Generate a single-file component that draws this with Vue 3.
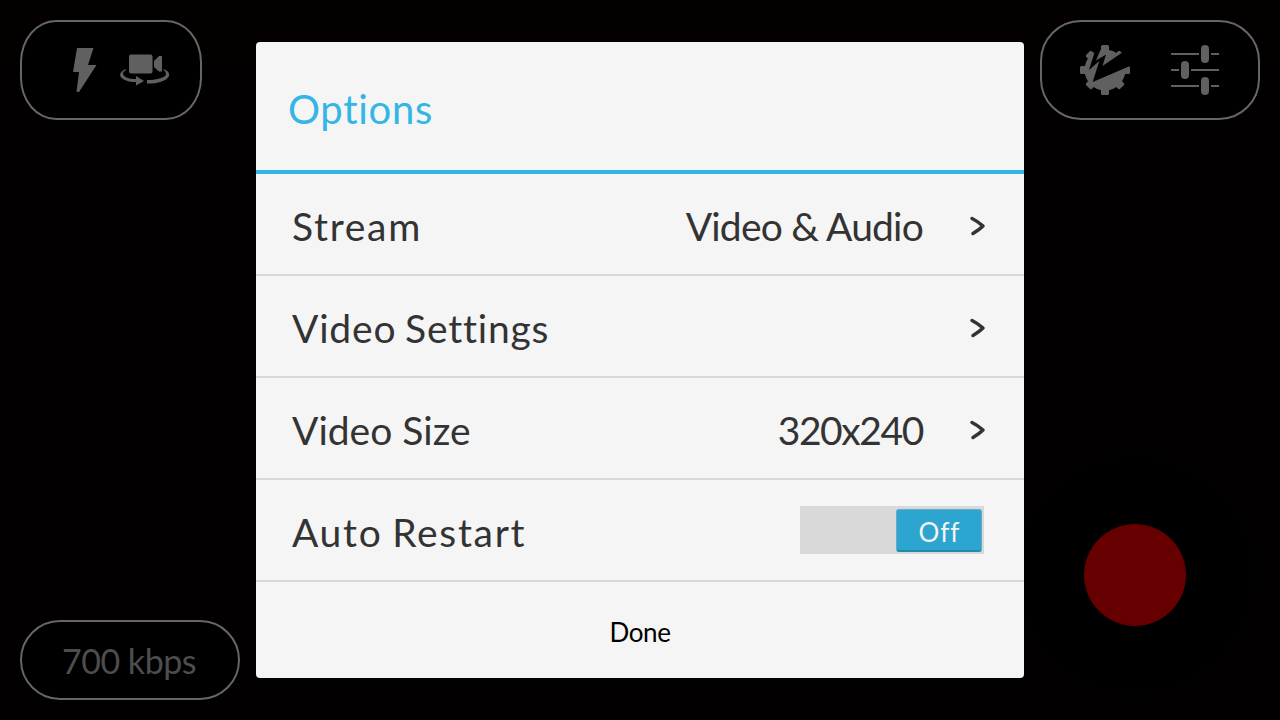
<script setup>
const rows = [
  { id: 'stream', label: 'Stream', value: 'Video & Audio' },
  { id: 'settings', label: 'Video Settings', value: '' },
  { id: 'size', label: 'Video Size', value: '320x240' },
]
</script>

<template>
  <div class="screen">
    <aside class="side left">
      <div class="pill camera">
        <svg class="bolt" width="26" height="46" viewBox="0 0 26 46"><path d="M5 1H21.500L16 18H24.500L7 45H4.500L7 25H1Z" /></svg>
        <svg class="flip" width="50" height="32" viewBox="0 0 50 32">
          <rect x="9" y="0.500" width="23.500" height="19" rx="2" />
          <path d="M34 7L39 2H42V17.500H39L34 13Z" />
          <path d="M6 15C-1 18 -1.500 22 3 25C7 27.500 11 28 16 28V31.500L24 27L16 22V25C9 25 3.500 23 3 20C3 18 4 17 6 16Z" />
          <path d="M43.500 15C51 18 51 23 44 26.500C39 29 34 29.500 27 29.500V26C35 26 45.500 24 46 20.500C46 18 45 17 43.500 16Z" />
        </svg>
      </div>
      <div class="pill rate"><span>700 kbps</span></div>
    </aside>
    <main class="dialog">
      <h1><span class="title">Options</span></h1>
      <div v-for="r in rows" :key="r.id" class="row">
        <span class="label" :class="r.id">{{ r.label }}</span>
        <span class="value" :class="'v-' + r.id">{{ r.value }}</span>
        <svg class="chevron" width="18" height="20" viewBox="0 0 18 20"><path d="M4 2.500Q10 5.500 15 10Q11 14 5 17.500" /></svg>
      </div>
      <div class="row">
        <span class="label restart">Auto Restart</span>
        <div class="switch"><div class="thumb"><span>Off</span></div></div>
      </div>
      <button class="done"><span>Done</span></button>
    </main>
    <aside class="side right">
      <div class="pill tools">
        <svg class="gear" width="50" height="50" viewBox="0 0 50 50">
          <circle cx="25" cy="25" r="20.5" />
          <path d="M21 6V1.500Q21 0 22.500 0H27.500Q29 0 29 1.500V6L32 8H18ZM21 44V48.500Q21 50 22.500 50H27.500Q29 50 29 48.500V44L32 42H18ZM6 21H1.500Q0 21 0 22.500V27.500Q0 29 1.500 29H6L8 32V18ZM44 21H48.500Q50 21 50 22.500V27.500Q50 29 48.500 29H44L42 32V18Z" />
          <g v-for="a in [45, 135, 225, 315]" :key="a" :transform="`rotate(${a} 25 25)`"><rect x="21" y="1" width="8" height="8" rx="1.500" /></g>
          <path class="cut" d="M15 6L9 25L19.300 16L12.700 37L51 20.500V7H43L22.500 21L26 9.500L16 15.500L21 3.500V0L14 0Z" />
        </svg>
        <svg class="sliders" width="48" height="50" viewBox="0 0 48 50">
          <path d="M0 8h28v2H0zM40 8h8v2h-8zM0 24h8v2H0zM20 24h28v2H20zM0 40h28v2H0zM40 40h8v2h-8z" />
          <rect x="30" y="0" width="8" height="18" rx="4" /><rect x="10" y="16" width="8" height="18" rx="4" /><rect x="30" y="32" width="8" height="18" rx="4" />
        </svg>
      </div>
      <div class="record"><i></i></div>
    </aside>
  </div>
</template>

<style>
body { margin: 0; background: #020000; }
</style>
<style scoped>
* { box-sizing: border-box; }
.screen { width: 1280px; height: 720px; overflow: hidden; display: grid; grid-template-columns: 256px 768px 256px; align-items: center; background: linear-gradient(#050000, #020000 90px); font-family: Lato, "Noto Sans", sans-serif; font-variant-ligatures: none; }
.side { height: 720px; padding: 20px; display: flex; flex-direction: column; justify-content: space-between; }
.pill { border: 2px solid #666; background: #000; display: flex; align-items: center; fill: #606060; }
.camera { width: 182px; height: 100px; border-radius: 36px / 42px; padding-left: 50px; gap: 22px; }
.rate { width: 220px; height: 80px; border-radius: 40px; color: #4d4d4d; font-size: 34px; letter-spacing: -0.500px; padding-left: 40px; white-space: nowrap; }
.right { padding-left: 16px; padding-bottom: 25px; }
.tools { width: 220px; height: 100px; border-radius: 41px; padding-left: 38px; gap: 41px; }
.cut { fill: #000; }
.record { width: 240px; height: 240px; border-radius: 50%; background: #000; display: grid; place-items: center; margin-left: -25px; }
.record i { width: 102px; height: 102px; border-radius: 50%; background: #600; }
.dialog { z-index: 1; width: 768px; height: 636px; background: #f5f5f5; border-radius: 4px; overflow: hidden; display: flex; flex-direction: column; }
h1 { margin: 0; height: 132px; flex: none; border-bottom: 4px solid #33b5e5; padding: 6px 32px 0; display: flex; align-items: center; font-weight: 400; font-size: 40px; letter-spacing: 0.700px; color: #33b5e5; }
.row { height: 102px; flex: none; border-bottom: 2px solid #dadada; padding: 4px 38px 0 36px; display: flex; align-items: center; font-size: 39px; color: #333; white-space: nowrap; }
.stream { letter-spacing: 1.700px; }
.settings { letter-spacing: 0.800px; word-spacing: -2px; }
.restart { letter-spacing: 1.700px; word-spacing: -2px; }
.value { margin-left: auto; margin-right: 45px; }
.v-stream { letter-spacing: -0.800px; }
.v-size { letter-spacing: -1.400px; }
.chevron { fill: none; stroke: #333; stroke-width: 3.500; stroke-linecap: round; stroke-linejoin: round; }
.switch { margin: 0 2px 4px auto; width: 184px; height: 48px; padding: 3px 2px 2px; background: #d9d9d9; display: flex; justify-content: flex-end; }
.thumb { width: 86px; height: 43px; border: 1px solid #65abc4; border-bottom: 2px solid #248bac; border-radius: 3px; background: #2ca5d0; color: #f5f5f5; font-size: 26px; letter-spacing: 1px; padding: 3px 0 0 1px; display: grid; place-items: center; }
.done { flex: 1; border: 0; background: none; font: 26px Lato, sans-serif; letter-spacing: -0.400px; padding: 4px 1px 0; color: #000; }
</style>
